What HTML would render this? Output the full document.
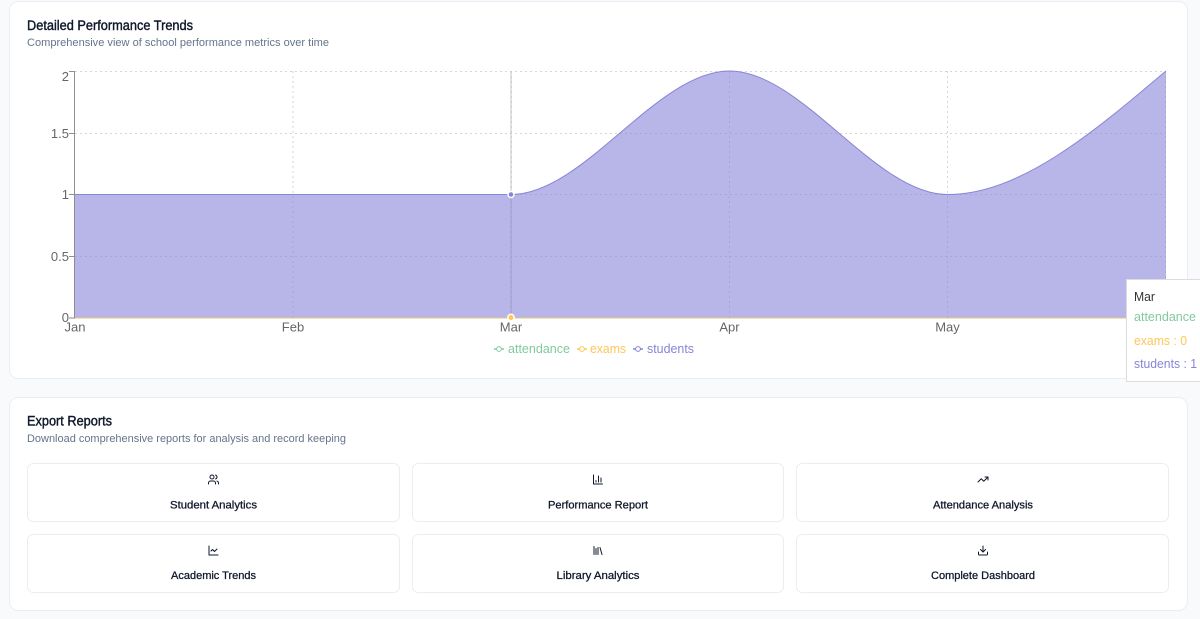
<!DOCTYPE html>
<html><head><meta charset="utf-8"><title>Reports</title>
<style>
html,body{margin:0;padding:0;width:1200px;height:619px;overflow:hidden;background:#f8fafc}
svg{display:block;font-family:"Liberation Sans",sans-serif}
.t{font-size:13.5px;fill:#0f172a;stroke:#0f172a;stroke-width:.4}
.s{font-size:11px;fill:#64748b}
.b{font-size:11px;fill:#0f172a;stroke:#0f172a;stroke-width:.28;text-anchor:middle}
.a{font-size:13px;fill:#666}
.card{fill:#fff;stroke:#e9eef4}
.btn{fill:#fff;stroke:#e9eef4}
.i{fill:none;stroke:#0f172a;stroke-width:2;stroke-linecap:round;stroke-linejoin:round}
</style></head>
<body>
<svg width="1200" height="619" viewBox="0 0 1200 619" xmlns="http://www.w3.org/2000/svg">
<rect class="card" x="9.5" y="1.5" width="1178" height="377" rx="9"/>
<rect class="card" x="9.5" y="397.5" width="1178" height="213" rx="9"/>

<text class="t" x="27" y="30" textLength="166" lengthAdjust="spacingAndGlyphs">Detailed Performance Trends</text>
<text class="s" x="27" y="46" textLength="302" lengthAdjust="spacingAndGlyphs">Comprehensive view of school performance metrics over time</text>

<!-- grid -->
<g stroke="#d6d6d6" stroke-dasharray="2 3" fill="none">
<path d="M75 71.5H1166M75 133.5H1166M75 194.5H1166M75 256.5H1166M75 318H1166"/>
<path d="M293 71V318M511.5 71V318M729.5 71V318M947.5 71V318M1165.5 71V318"/>
</g>
<!-- cursor -->
<path d="M511 71V318" stroke="#c4c4c4" fill="none"/>
<!-- area -->
<path d="M75 194.5H511C584 194.5 656.5 71 729.5 71C802 71 875 194.5 947.5 194.5C1020 194.5 1093 132.7 1166 71V318H75Z" fill="#8884d8" fill-opacity=".6"/>
<path d="M75 194.5H511C584 194.5 656.5 71 729.5 71C802 71 875 194.5 947.5 194.5C1020 194.5 1093 132.7 1166 71" fill="none" stroke="#8884d8"/>
<path d="M75 318H1166" stroke="#e3c878" fill="none"/>
<!-- axes -->
<g stroke="#8e8e8e" fill="none">
<path d="M74.5 71V318M69 71.5H75M69 133.5H75M69 194.5H75M69 256.5H75M69 318H75"/>
</g>
<g>
<text class="a" x="69" y="81" text-anchor="end">2</text>
<text class="a" x="69" y="138" text-anchor="end">1.5</text>
<text class="a" x="69" y="199" text-anchor="end">1</text>
<text class="a" x="69" y="261" text-anchor="end">0.5</text>
<text class="a" x="69" y="322" text-anchor="end">0</text>
<text class="a" x="75" y="331.5" text-anchor="middle">Jan</text>
<text class="a" x="293" y="331.5" text-anchor="middle">Feb</text>
<text class="a" x="511" y="331.5" text-anchor="middle">Mar</text>
<text class="a" x="729.5" y="331.5" text-anchor="middle">Apr</text>
<text class="a" x="947.5" y="331.5" text-anchor="middle">May</text>
</g>
<!-- active dots -->
<circle cx="511" cy="194.5" r="3" fill="#8884d8" stroke="#fff" stroke-width="1.5"/>
<circle cx="511" cy="317.5" r="3.2" fill="#ffc658" stroke="#fff" stroke-width="1.5"/>
<!-- legend -->
<g font-size="13">
<path d="M494 349H504" stroke="#82ca9d" stroke-width="1.5"/><circle cx="499" cy="349" r="2.4" fill="#fff" stroke="#82ca9d"/>
<text x="508" y="353" fill="#82ca9d" textLength="62" lengthAdjust="spacingAndGlyphs">attendance</text>
<path d="M577 349H587" stroke="#ffc658" stroke-width="1.5"/><circle cx="582" cy="349" r="2.4" fill="#fff" stroke="#ffc658"/>
<text x="590" y="353" fill="#ffc658" textLength="36" lengthAdjust="spacingAndGlyphs">exams</text>
<path d="M633 349H643" stroke="#8884d8" stroke-width="1.5"/><circle cx="638" cy="349" r="2.4" fill="#fff" stroke="#8884d8"/>
<text x="647" y="353" fill="#8884d8" textLength="47" lengthAdjust="spacingAndGlyphs">students</text>
</g>
<!-- tooltip -->
<rect x="1126.5" y="279.5" width="90" height="102" fill="#fff" stroke="#dcdcdc"/>
<g font-size="13">
<text x="1134" y="301" fill="#333" textLength="21" lengthAdjust="spacingAndGlyphs">Mar</text>
<text x="1134" y="321" fill="#82ca9d" textLength="62" lengthAdjust="spacingAndGlyphs">attendance</text>
<text x="1134" y="345" fill="#ffc658" textLength="53" lengthAdjust="spacingAndGlyphs">exams : 0</text>
<text x="1134" y="368" fill="#8884d8" textLength="63" lengthAdjust="spacingAndGlyphs">students : 1</text>
</g>

<text class="t" x="27" y="425.5" textLength="85" lengthAdjust="spacingAndGlyphs">Export Reports</text>
<text class="s" x="27" y="442" textLength="319" lengthAdjust="spacingAndGlyphs">Download comprehensive reports for analysis and record keeping</text>

<rect class="btn" x="27.5" y="463.5" width="372" height="58" rx="6"/>
<rect class="btn" x="412.5" y="463.5" width="371" height="58" rx="6"/>
<rect class="btn" x="796.5" y="463.5" width="372" height="58" rx="6"/>
<rect class="btn" x="27.5" y="534.5" width="372" height="58" rx="6"/>
<rect class="btn" x="412.5" y="534.5" width="371" height="58" rx="6"/>
<rect class="btn" x="796.5" y="534.5" width="372" height="58" rx="6"/>

<text class="b" x="213.5" y="508.5" textLength="87" lengthAdjust="spacingAndGlyphs">Student Analytics</text>
<text class="b" x="598" y="508.5" textLength="100" lengthAdjust="spacingAndGlyphs">Performance Report</text>
<text class="b" x="983" y="508.5" textLength="100" lengthAdjust="spacingAndGlyphs">Attendance Analysis</text>
<text class="b" x="213.5" y="579" textLength="85" lengthAdjust="spacingAndGlyphs">Academic Trends</text>
<text class="b" x="598" y="579" textLength="83" lengthAdjust="spacingAndGlyphs">Library Analytics</text>
<text class="b" x="983" y="579" textLength="104" lengthAdjust="spacingAndGlyphs">Complete Dashboard</text>

<!-- users -->
<g class="i" transform="translate(207.5 473.5) scale(.5)">
<path d="M16 21v-2a4 4 0 0 0-4-4H6a4 4 0 0 0-4 4v2"/><circle cx="9" cy="7" r="4"/><path d="M22 21v-2a4 4 0 0 0-3-3.87"/><path d="M16 3.13a4 4 0 0 1 0 7.75"/>
</g>
<!-- chart column -->
<g class="i" transform="translate(592 473.5) scale(.5)">
<path d="M3 3v18h18"/><path d="M18 17V9"/><path d="M13 17V5"/><path d="M8 17v-3"/>
</g>
<!-- trending up -->
<g class="i" transform="translate(977 473.5) scale(.5)">
<polyline points="22 7 13.5 15.5 8.5 10.5 2 17"/><polyline points="16 7 22 7 22 13"/>
</g>
<!-- line chart -->
<g class="i" transform="translate(207.5 544.5) scale(.5)">
<path d="M3 3v18h18"/><path d="m19 9-5 5-4-4-3 3"/>
</g>
<!-- library -->
<g class="i" transform="translate(592 544.5) scale(.5)">
<path d="m16 6 4 14"/><path d="M12 6v14"/><path d="M8 8v12"/><path d="M4 4v16"/>
</g>
<!-- download -->
<g class="i" transform="translate(977 544.5) scale(.5)">
<path d="M21 15v4a2 2 0 0 1-2 2H5a2 2 0 0 1-2-2v-4"/><polyline points="7 10 12 15 17 10"/><line x1="12" y1="15" x2="12" y2="3"/>
</g>
</svg>
</body></html>
